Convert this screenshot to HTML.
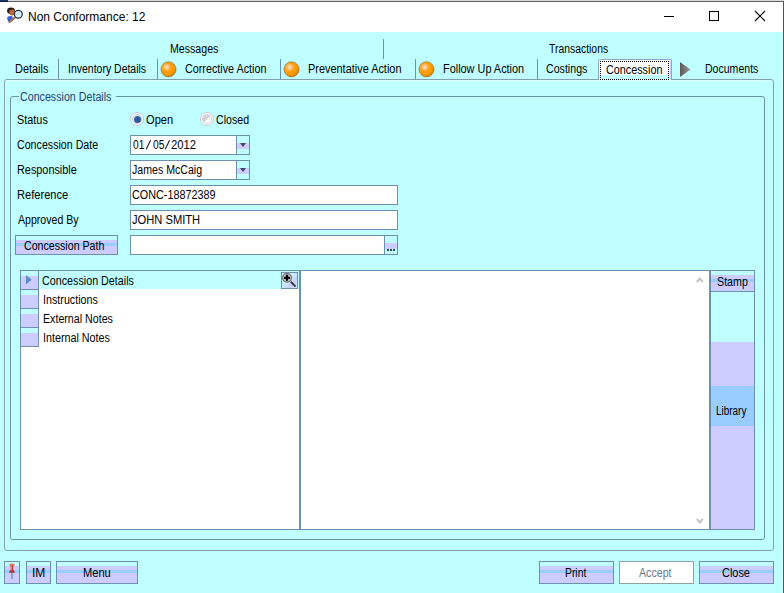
<!DOCTYPE html>
<html><head><meta charset="utf-8">
<style>
html,body{margin:0;padding:0;}
body{width:784px;height:593px;overflow:hidden;position:relative;background:#C0FFFF;font-family:"Liberation Sans",sans-serif;}
.a{position:absolute;box-sizing:border-box;}
.t{position:absolute;font-size:12px;line-height:12px;white-space:nowrap;color:#000;transform-origin:0 0;transform:scaleX(.91);}
.bd{border:1px solid #6D8FB0;}
.wh{background:#fff;}
.btn{position:absolute;box-sizing:border-box;border:1px solid #6D8FB0;background:linear-gradient(#C0FFFF 0,#C0FFFF 4px,#CCCCFF 4px,#CCCCFF 8px,#99CCFF 8px,#99CCFF 11px,#CCCCFF 11px,#CCCCFF 100%);}
.ball{position:absolute;width:16px;height:16px;border-radius:50%;background:radial-gradient(circle at 38% 36%,#FFE0C0 0,#FFD090 14%,#FFA010 38%,#F59800 75%,#D08000 88%,#8A6A40 100%);box-shadow:0 0 0 .6px rgba(90,70,40,.55);}
</style></head><body>
<!-- window frame -->
<div class="a" style="left:0;top:0;width:784px;height:1px;background:#D9D9D9;"></div>
<div class="a" style="left:0;top:1px;width:784px;height:1px;background:#5F5F5F;"></div>
<div class="a" style="left:0;top:0;width:8px;height:1px;background:#1C3A6A;"></div>
<div class="a" style="left:0;top:1px;width:8px;height:1px;background:#0E1E40;"></div>
<div class="a" style="left:782px;top:32px;width:1px;height:561px;background:#D8FFFF;"></div>
<div class="a" style="left:783px;top:2px;width:1px;height:591px;background:#3F5F5F;"></div>
<!-- title bar -->
<div class="a" style="left:0;top:2px;width:783px;height:30px;background:#fff;"></div>
<svg class="a" style="left:4px;top:4px" width="24" height="24" viewBox="0 0 24 24">
  <ellipse cx="7" cy="6.8" rx="3.9" ry="3.2" fill="#2A1C14"/>
  <ellipse cx="8" cy="8.6" rx="2.7" ry="3" fill="#B8683C"/>
  <path d="M3 13.5 Q5 11.5 8.5 12.2 L8.5 17 L4 17.5 Z" fill="#3A5CD8"/>
  <path d="M5.5 18 L10.8 13.6" stroke="#9C6E52" stroke-width="2.2" stroke-linecap="round"/>
  <circle cx="14.3" cy="10.2" r="3.9" fill="#DDF6FF" stroke="#2A3444" stroke-width="1.3"/>
  <path d="M12.5 11 Q13.5 8.8 15.5 8.6" stroke="#7AB8E8" stroke-width="0.8" fill="none"/>
</svg>
<div class="t" style="left:28px;top:11px;transform:none;">Non Conformance: 12</div>
<div class="a" style="left:664px;top:16px;width:10px;height:1px;background:#000;"></div>
<div class="a" style="left:709px;top:11px;width:10px;height:10px;border:1px solid #000;"></div>
<svg class="a" style="left:754px;top:10px" width="12" height="12" viewBox="0 0 12 12"><path d="M1 1 L11 11 M11 1 L1 11" stroke="#000" stroke-width="1.1"/></svg>

<!-- tabs header row 1 -->
<div class="t" style="left:170.12px;top:43px;transform:scaleX(0.885);">Messages</div>
<div class="a" style="left:383px;top:39px;width:1px;height:20px;background:#6D8FB0;"></div>
<div class="t" style="left:549.0px;top:43px;transform:scaleX(0.866);">Transactions</div>

<!-- tab row 2 -->
<div class="t" style="left:15.09px;top:63px;transform:scaleX(0.912);">Details</div>
<div class="a" style="left:58px;top:59px;width:1px;height:21px;background:#6D8FB0;"></div>
<div class="t" style="left:68.13px;top:63px;transform:scaleX(0.874);">Inventory Details</div>
<div class="a" style="left:157px;top:59px;width:1px;height:21px;background:#6D8FB0;"></div>
<svg class="a" style="left:160px;top:61px" width="17" height="17" viewBox="0 0 17 17"><defs><radialGradient id="bg1" cx="0.38" cy="0.36" r="0.62"><stop offset="0" stop-color="#FFE4CC"/><stop offset="0.2" stop-color="#FFC888"/><stop offset="0.45" stop-color="#FFA010"/><stop offset="0.85" stop-color="#F59800"/><stop offset="1" stop-color="#D88600"/></radialGradient></defs><circle cx="8.5" cy="8.3" r="7.6" fill="url(#bg1)" stroke="#7A5A30" stroke-opacity=".6" stroke-width=".8"/></svg>
<div class="t" style="left:185.1px;top:63px;transform:scaleX(0.898);">Corrective Action</div>
<div class="a" style="left:280px;top:59px;width:1px;height:21px;background:#6D8FB0;"></div>
<svg class="a" style="left:283px;top:61px" width="17" height="17" viewBox="0 0 17 17"><defs><radialGradient id="bg2" cx="0.38" cy="0.36" r="0.62"><stop offset="0" stop-color="#FFE4CC"/><stop offset="0.2" stop-color="#FFC888"/><stop offset="0.45" stop-color="#FFA010"/><stop offset="0.85" stop-color="#F59800"/><stop offset="1" stop-color="#D88600"/></radialGradient></defs><circle cx="8.5" cy="8.3" r="7.6" fill="url(#bg2)" stroke="#7A5A30" stroke-opacity=".6" stroke-width=".8"/></svg>
<div class="t" style="left:308.09px;top:63px;transform:scaleX(0.91);">Preventative Action</div>
<div class="a" style="left:415px;top:59px;width:1px;height:21px;background:#6D8FB0;"></div>
<svg class="a" style="left:418px;top:61px" width="17" height="17" viewBox="0 0 17 17"><defs><radialGradient id="bg3" cx="0.38" cy="0.36" r="0.62"><stop offset="0" stop-color="#FFE4CC"/><stop offset="0.2" stop-color="#FFC888"/><stop offset="0.45" stop-color="#FFA010"/><stop offset="0.85" stop-color="#F59800"/><stop offset="1" stop-color="#D88600"/></radialGradient></defs><circle cx="8.5" cy="8.3" r="7.6" fill="url(#bg3)" stroke="#7A5A30" stroke-opacity=".6" stroke-width=".8"/></svg>
<div class="t" style="left:443.09px;top:63px;transform:scaleX(0.908);">Follow Up Action</div>
<div class="a" style="left:537px;top:59px;width:1px;height:21px;background:#6D8FB0;"></div>
<div class="t" style="left:546.11px;top:63px;transform:scaleX(0.886);">Costings</div>
<!-- selected tab -->
<div class="a" style="left:598px;top:59px;width:74px;height:21px;border:1px solid #8FA8C8;border-bottom:none;border-radius:2px 2px 0 0;background:linear-gradient(#fff 0,#fff 15px,#C0FFFF 15px);"></div>
<div class="a" style="left:670px;top:61px;width:1px;height:19px;background:#CCCCFF;"></div>
<div class="t" style="left:606.1px;top:64px;transform:scaleX(0.9);">Concession</div>
<svg class="a" style="left:680px;top:62px" width="11" height="15" viewBox="0 0 11 15"><defs><linearGradient id="ag" x1="0" y1="0" x2="1" y2="0"><stop offset="0" stop-color="#5A5A5A"/><stop offset="1" stop-color="#9A9A9A"/></linearGradient></defs><path d="M0 0 L10.5 7.5 L0 15 Z" fill="url(#ag)"/></svg>
<div class="t" style="left:705.12px;top:63px;transform:scaleX(0.879);">Documents</div>

<!-- tab panel -->
<div class="a" style="left:4px;top:79px;width:770px;height:472px;border:1px solid #80A0B2;border-radius:3px;box-shadow:inset 1px 1px 0 #E2FFFF;"></div>
<div class="a" style="left:599px;top:79px;width:72px;height:1px;background:#C0FFFF;"></div>
<div class="a" style="left:600px;top:61px;width:69px;height:19px;border:1px dotted #000;"></div>
<!-- group box -->
<div class="a" style="left:10px;top:96px;width:755px;height:444px;border:1px solid #6A94AE;border-radius:3px;"></div>
<div class="a" style="left:19px;top:90px;width:97px;height:12px;background:#C0FFFF;"></div>
<div class="t" style="left:20.11px;top:91px;color:#1C3F78;transform:scaleX(0.89);">Concession Details</div>

<!-- form -->
<div class="t" style="left:17.09px;top:114px;transform:scaleX(0.906);">Status</div>
<div class="a" style="left:130px;top:112px;width:14px;height:14px;border-radius:50%;background:#fff;border:1px solid #BAC4DA;"></div>
<div class="a" style="left:132px;top:114px;width:10px;height:10px;border-radius:50%;background:#F2F6FA;border:1px solid #C4CCD6;"></div>
<div class="a" style="left:133.5px;top:115.5px;width:7px;height:7px;border-radius:50%;background:#2C5E9E;"></div>
<div class="t" style="left:146.07px;top:114px;transform:scaleX(0.926);">Open</div>
<div class="a" style="left:200px;top:112px;width:14px;height:14px;border-radius:50%;background:#fff;border:1px solid #C2C8D6;"></div>
<div class="a" style="left:202px;top:114px;width:10px;height:10px;border-radius:50%;background:linear-gradient(135deg,#D6D2D8 0,#D6D2D8 55%,#FFFFFF 55%);border:1px solid #D0D0D8;"></div>
<div class="t" style="left:216.11px;top:114px;transform:scaleX(0.886);">Closed</div>

<div class="t" style="left:17.11px;top:139px;transform:scaleX(0.888);">Concession Date</div>
<div class="a bd wh" style="left:130px;top:135px;width:120px;height:20px;"></div>
<div class="a" style="left:236px;top:135px;width:1px;height:20px;background:#6D8FB0;"></div>
<div class="a" style="left:237px;top:136px;width:12px;height:18px;background:linear-gradient(#C0FFFF 0,#C0FFFF 7px,#CCCCFF 7px,#CCCCFF 13px,#C0FFFF 13px);"></div>
<svg class="a" style="left:240px;top:143px" width="6" height="4"><path d="M0 0 L6 0 L3 4Z" fill="#404868"/></svg>
<div class="t" style="left:133px;top:139px;transform:scaleX(.85);">01</div>
<svg class="a" style="left:145px;top:139px" width="27" height="11"><path d="M1.2 10.2 L5.6 1.2 M20.2 10.2 L24.6 1.2" stroke="#1A1A1A" stroke-width="1.1"/></svg>
<div class="t" style="left:153px;top:139px;transform:scaleX(.85);">05</div>
<div class="t" style="left:171px;top:139px;transform:scaleX(.94);">2012</div>

<div class="t" style="left:17.1px;top:164px;transform:scaleX(0.905);">Responsible</div>
<div class="a bd wh" style="left:130px;top:160px;width:120px;height:20px;"></div>
<div class="a" style="left:236px;top:160px;width:1px;height:20px;background:#6D8FB0;"></div>
<div class="a" style="left:237px;top:161px;width:12px;height:18px;background:linear-gradient(#C0FFFF 0,#C0FFFF 7px,#CCCCFF 7px,#CCCCFF 13px,#C0FFFF 13px);"></div>
<svg class="a" style="left:240px;top:168px" width="6" height="4"><path d="M0 0 L6 0 L3 4Z" fill="#404868"/></svg>
<div class="t" style="left:132.12px;top:164px;transform:scaleX(0.883);">James McCaig</div>

<div class="t" style="left:17.08px;top:189px;transform:scaleX(0.925);">Reference</div>
<div class="a bd wh" style="left:130px;top:185px;width:268px;height:20px;"></div>
<div class="t" style="left:132.1px;top:189px;transform:scaleX(0.9);">CONC-18872389</div>

<div class="t" style="left:18.0px;top:214px;transform:scaleX(0.882);">Approved By</div>
<div class="a bd wh" style="left:130px;top:210px;width:268px;height:20px;"></div>
<div class="t" style="left:132.07px;top:214px;transform:scaleX(0.929);">JOHN SMITH</div>

<div class="btn" style="left:15px;top:235px;width:103px;height:20px;background:linear-gradient(#C0FFFF 0,#C0FFFF 4px,#CCCCFF 4px,#CCCCFF 7px,#99CCFF 7px,#99CCFF 10px,#CCCCFF 10px);"></div>
<div class="t" style="left:24.11px;top:240px;transform:scaleX(0.886);">Concession Path</div>
<div class="a bd wh" style="left:130px;top:235px;width:268px;height:20px;"></div>
<div class="a" style="left:384px;top:235px;width:1px;height:20px;background:#6D8FB0;"></div>
<div class="a" style="left:385px;top:236px;width:12px;height:18px;background:linear-gradient(#C0FFFF 0,#C0FFFF 7px,#CCCCFF 7px,#CCCCFF 13px,#C0FFFF 13px);"></div>
<div class="a" style="left:387px;top:249px;width:2px;height:2px;background:#3A4A5A;"></div>
<div class="a" style="left:390px;top:249px;width:2px;height:2px;background:#3A4A5A;"></div>
<div class="a" style="left:393px;top:249px;width:2px;height:2px;background:#3A4A5A;"></div>

<!-- grid -->
<div class="a bd wh" style="left:20px;top:270px;width:281px;height:260px;"></div>
<div class="a" style="left:39px;top:271px;width:260px;height:18px;background:#C0FFFF;"></div>
<div class="a" style="left:21px;top:271px;width:17px;height:18px;background:linear-gradient(#C0FFFF 0,#C0FFFF 5px,#CCCCFF 5px);"></div>
<div class="a" style="left:21px;top:290px;width:17px;height:18px;background:linear-gradient(#C0FFFF 0,#C0FFFF 5px,#CCCCFF 5px);"></div>
<div class="a" style="left:21px;top:309px;width:17px;height:18px;background:linear-gradient(#C0FFFF 0,#C0FFFF 5px,#CCCCFF 5px);"></div>
<div class="a" style="left:21px;top:328px;width:17px;height:18px;background:linear-gradient(#C0FFFF 0,#C0FFFF 5px,#CCCCFF 5px);"></div>
<div class="a" style="left:38px;top:271px;width:1px;height:76px;background:#6D8FB0;"></div>
<div class="a" style="left:21px;top:289px;width:17px;height:1px;background:#6D8FB0;"></div>
<div class="a" style="left:21px;top:308px;width:17px;height:1px;background:#6D8FB0;"></div>
<div class="a" style="left:21px;top:327px;width:17px;height:1px;background:#6D8FB0;"></div>
<div class="a" style="left:21px;top:346px;width:17px;height:1px;background:#6D8FB0;"></div>
<svg class="a" style="left:26px;top:275px" width="6" height="10"><path d="M0 0 L5.5 4.8 L0 9.6Z" fill="#5B8AC8"/></svg>
<div class="t" style="left:41.5px;top:275px;transform:scaleX(0.895);">Concession Details</div>
<div class="t" style="left:42.61px;top:294px;transform:scaleX(0.895);">Instructions</div>
<div class="t" style="left:42.61px;top:313px;transform:scaleX(0.888);">External Notes</div>
<div class="t" style="left:42.6px;top:332px;transform:scaleX(0.896);">Internal Notes</div>
<!-- magnifier button -->
<div class="a" style="left:281px;top:272px;width:17px;height:17px;border:1px solid #6D8FB0;background:linear-gradient(135deg,#D8FFFF 0,#C8E8FF 50%,#CCCCFF 70%,#C8F0FF 100%);"></div>
<svg class="a" style="left:282px;top:273px" width="15" height="15" viewBox="0 0 15 15">
  <circle cx="5" cy="4.8" r="4.4" fill="#C4C4C4" stroke="#707070" stroke-width="1.2"/>
  <path d="M2 4.8 H8 M5 1.8 V7.8" stroke="#000" stroke-width="2.2"/>
  <path d="M8.8 8.8 L13.6 13.6" stroke="#3A3A3A" stroke-width="2"/>
</svg>

<!-- memo -->
<div class="a bd wh" style="left:299px;top:270px;width:412px;height:260px;border-width:1px 1px 1px 2px;"></div>
<svg class="a" style="left:696px;top:277px" width="8" height="6"><path d="M0.8 5 L3.8 1.5 L6.8 5" stroke="#C4C4C4" stroke-width="2" fill="none"/></svg>
<svg class="a" style="left:696px;top:518px" width="8" height="6"><path d="M0.8 1 L3.8 4.5 L6.8 1" stroke="#C4C4C4" stroke-width="2" fill="none"/></svg>

<!-- stamp column -->
<div class="a" style="left:709px;top:270px;width:46px;height:260px;border:1px solid #6D8FB0;border-left-width:2px;background:linear-gradient(#C0FFFF 0,#C0FFFF 71px,#CCCCFF 71px,#CCCCFF 115px,#99CCFF 115px,#99CCFF 155px,#CCCCFF 155px);"></div>
<div class="a" style="left:711px;top:271px;width:43px;height:21px;border-bottom:1px solid #6D8FB0;background:linear-gradient(#C0FFFF 0,#C0FFFF 4px,#CCCCFF 4px,#CCCCFF 8px,#99CCFF 8px,#99CCFF 11px,#CCCCFF 11px);"></div>
<div class="t" style="left:716.51px;top:276px;transform:scaleX(0.891);">Stamp</div>
<div class="t" style="left:716.17px;top:405px;transform:scaleX(0.829);">Library</div>

<!-- bottom buttons -->
<div class="btn" style="left:4px;top:561px;width:16px;height:23px;"></div>
<svg class="a" style="left:6px;top:562px" width="12" height="19" viewBox="0 0 12 19">
  <path d="M6 10.5 L6 17" stroke="#7E9CBC" stroke-width="1.6"/>
  <ellipse cx="6" cy="3" rx="2.9" ry="1.4" fill="#E4806E"/>
  <path d="M4.6 3.3 H7.4 L7.3 7.2 L8.9 10.4 H3.1 L4.7 7.2 Z" fill="#C84440"/>
  <path d="M3.3 10 L8.7 10" stroke="#982424" stroke-width="1"/>
  <path d="M5.2 4 V7.6" stroke="#F0A8A0" stroke-width="0.8"/>
</svg>
<div class="btn" style="left:26px;top:561px;width:25px;height:23px;"></div>
<div class="t" style="left:32.0px;top:567px;transform:scaleX(1.0);">IM</div>
<div class="btn" style="left:56px;top:561px;width:82px;height:23px;"></div>
<div class="t" style="left:83.07px;top:567px;transform:scaleX(0.926);">Menu</div>
<div class="btn" style="left:539px;top:561px;width:75px;height:23px;"></div>
<div class="t" style="left:565.14px;top:567px;transform:scaleX(0.864);">Print</div>
<div class="a" style="left:619px;top:561px;width:75px;height:23px;border:1px solid #8FA0A0;background:#fff;"></div>
<div class="t" style="left:639.3px;top:567px;color:#6A7688;transform:scaleX(0.886);">Accept</div>
<div class="btn" style="left:699px;top:561px;width:75px;height:23px;"></div>
<div class="t" style="left:721.59px;top:567px;transform:scaleX(0.911);">Close</div>
</body></html>
